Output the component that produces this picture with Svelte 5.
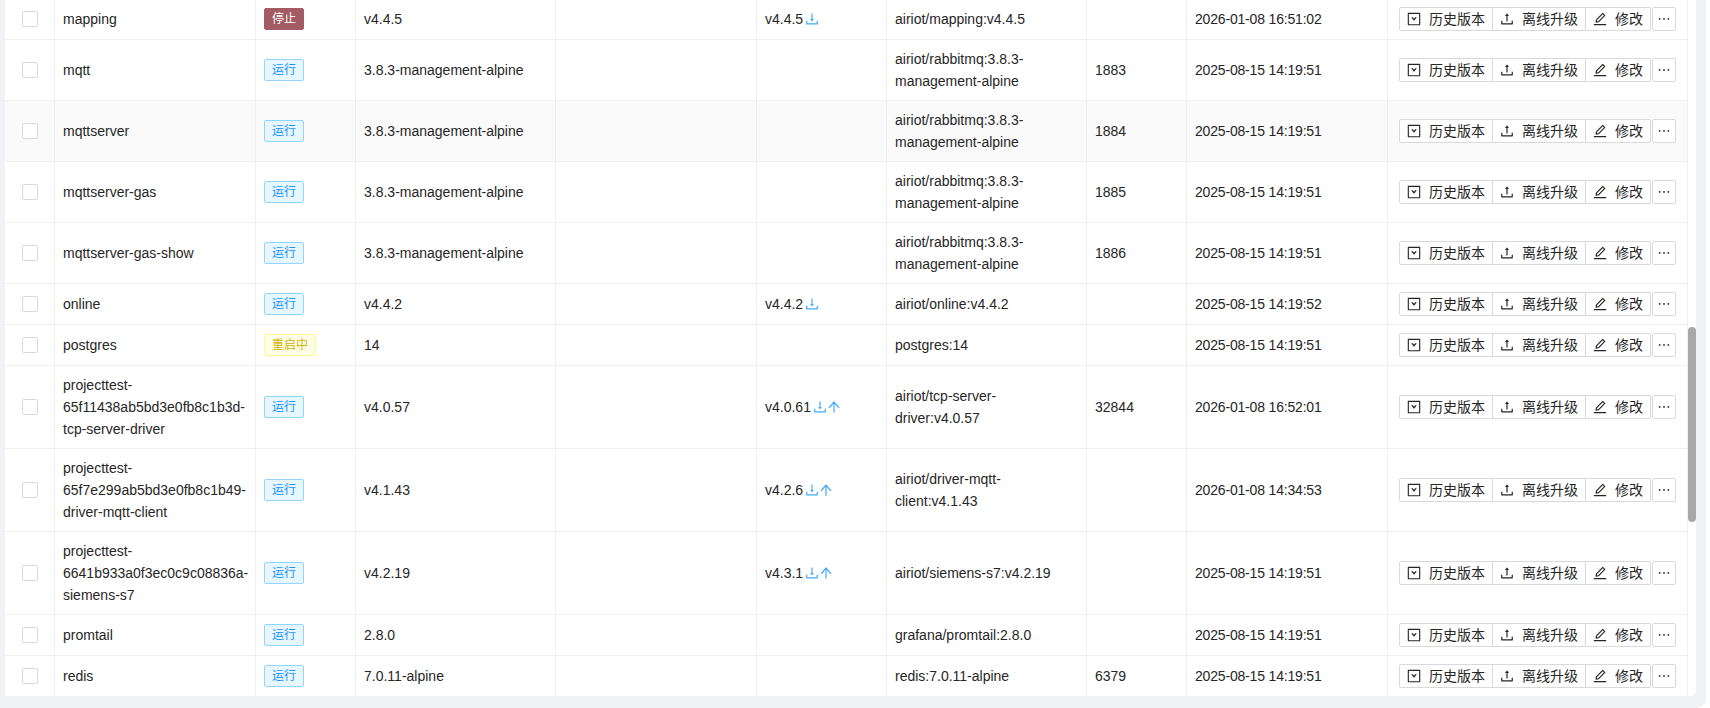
<script>
  const D = 'M505.7 661a8 8 0 0 0 12.6 0l112-141.7c4.1-5.2.4-12.9-6.3-12.9h-74.1V168c0-4.4-3.6-8-8-8h-60c-4.4 0-8 3.6-8 8v338.3H400c-6.7 0-10.4 7.7-6.3 12.9l112 141.8zM878 626h-60c-4.4 0-8 3.6-8 8v154H214V634c0-4.4-3.6-8-8-8h-60c-4.4 0-8 3.6-8 8v198c0 17.7 14.3 32 32 32h684c17.7 0 32-14.3 32-32V634c0-4.4-3.6-8-8-8z';
  const U = 'M400 317.7h73.9V656c0 4.4 3.6 8 8 8h60c4.4 0 8-3.6 8-8V317.7H624c6.7 0 10.4-7.7 6.3-12.9L518.3 163a8 8 0 0 0-12.6 0l-112 141.7c-4.1 5.3-.4 13 6.3 13zM878 626h-60c-4.4 0-8 3.6-8 8v154H214V634c0-4.4-3.6-8-8-8h-60c-4.4 0-8 3.6-8 8v198c0 17.7 14.3 32 32 32h684c17.7 0 32-14.3 32-32V634c0-4.4-3.6-8-8-8z';
  const E = 'M257.7 752c2 0 4-.2 6-.5L431.9 722c2-.4 3.9-1.3 5.3-2.8l423.9-423.9a9.94 9.94 0 0 0 0-14.1L694.9 114.9c-1.9-1.9-4.4-2.9-7.1-2.9s-5.2 1-7.1 2.9L256.8 538.8c-1.5 1.5-2.4 3.3-2.8 5.3l-29.5 168.2a33.5 33.5 0 0 0 9.4 29.8c6.6 6.4 14.9 9.9 23.8 9.9zm67.4-174.4L687.8 215l73.3 73.3-362.7 362.6-88.9 15.7 15.6-89zM880 836H144c-17.7 0-32 14.3-32 32v36c0 4.4 3.6 8 8 8h784c4.4 0 8-3.6 8-8v-36c0-17.7-14.3-32-32-32z';
  const M = 'M176 511a56 56 0 1 0 112 0 56 56 0 1 0-112 0zm280 0a56 56 0 1 0 112 0 56 56 0 1 0-112 0zm280 0a56 56 0 1 0 112 0 56 56 0 1 0-112 0z';
  const A = 'M868 545.5L536.1 163a31.96 31.96 0 0 0-48.3 0L156 545.5a7.97 7.97 0 0 0 6 13.2h81c4.6 0 9-2 12.1-5.5L474 300.9V864c0 4.4 3.6 8 8 8h60c4.4 0 8-3.6 8-8V300.9l218.9 252.3c3 3.5 7.4 5.5 12.1 5.5h81c6.8 0 10.5-8 6-13.2z';
  const S = 'M880 112H144c-17.7 0-32 14.3-32 32v736c0 17.7 14.3 32 32 32h736c17.7 0 32-14.3 32-32V144c0-17.7-14.3-32-32-32zm-40 728H184V184h656v656z';
  const C = 'M349 396h81c5 0 10 2 13 6l69 95 69-95c3-4 8-6 13-6h81c6.500 0 10 7 6 12.700L531 612c-5 7-33 7-38 0L343 408.700c-4-5.700-.5-12.700 6-12.700z';

  const rows = [
    { name: 'mapping', status: 'stop', version: 'v4.4.5', latest: 'v4.4.5', image: 'airiot/mapping:v4.4.5', port: '', time: '2026-01-08 16:51:02' },
    { name: 'mqtt', status: 'run', version: '3.8.3-management-alpine', image: 'airiot/rabbitmq:3.8.3-management-alpine', port: '1883', time: '2025-08-15 14:19:51' },
    { name: 'mqttserver', status: 'run', version: '3.8.3-management-alpine', image: 'airiot/rabbitmq:3.8.3-management-alpine', port: '1884', time: '2025-08-15 14:19:51', hover: true },
    { name: 'mqttserver-gas', status: 'run', version: '3.8.3-management-alpine', image: 'airiot/rabbitmq:3.8.3-management-alpine', port: '1885', time: '2025-08-15 14:19:51' },
    { name: 'mqttserver-gas-show', status: 'run', version: '3.8.3-management-alpine', image: 'airiot/rabbitmq:3.8.3-management-alpine', port: '1886', time: '2025-08-15 14:19:51' },
    { name: 'online', status: 'run', version: 'v4.4.2', latest: 'v4.4.2', image: 'airiot/online:v4.4.2', port: '', time: '2025-08-15 14:19:52' },
    { name: 'postgres', status: 'restart', version: '14', image: 'postgres:14', port: '', time: '2025-08-15 14:19:51' },
    { name: 'projecttest-65f11438ab5bd3e0fb8c1b3d-tcp-server-driver', status: 'run', version: 'v4.0.57', latest: 'v4.0.61', up: true, image: 'airiot/tcp-server-driver:v4.0.57', port: '32844', time: '2026-01-08 16:52:01' },
    { name: 'projecttest-65f7e299ab5bd3e0fb8c1b49-driver-mqtt-client', status: 'run', version: 'v4.1.43', latest: 'v4.2.6', up: true, image: 'airiot/driver-mqtt-client:v4.1.43', port: '', time: '2026-01-08 14:34:53' },
    { name: 'projecttest-6641b933a0f3ec0c9c08836a-siemens-s7', status: 'run', version: 'v4.2.19', latest: 'v4.3.1', up: true, image: 'airiot/siemens-s7:v4.2.19', port: '', time: '2025-08-15 14:19:51' },
    { name: 'promtail', status: 'run', version: '2.8.0', image: 'grafana/promtail:2.8.0', port: '', time: '2025-08-15 14:19:51' },
    { name: 'redis', status: 'run', version: '7.0.11-alpine', image: 'redis:7.0.11-alpine', port: '6379', time: '2025-08-15 14:19:51' }
  ];
  const labels = { run: '运行', stop: '停止', restart: '重启中' };
</script>

{#snippet icon(d, cls = '')}
  <svg class="icon {cls}" viewBox="64 64 896 896" fill="currentColor" aria-hidden="true"><path {d} /></svg>
{/snippet}

<div class="page">
  <div class="panel">
    <table>
      <colgroup>
        <col class="c1" /><col class="c2" /><col class="c3" /><col class="c4" /><col class="c5" />
        <col class="c6" /><col class="c7" /><col class="c8" /><col class="c9" /><col class="c10" />
      </colgroup>
      <tbody>
        {#each rows as r}
          <tr class:hover={r.hover}>
            <td class="check"><span class="box"></span></td>
            <td class="name">{r.name}</td>
            <td><span class="tag {r.status}">{labels[r.status]}</span></td>
            <td>{r.version}</td>
            <td></td>
            <td>
              {#if r.latest}
                <span class="latest">
                  {r.latest}
                  <span class="links">
                    {@render icon(D)}
                    {#if r.up}{@render icon(A)}{/if}
                  </span>
                </span>
              {/if}
            </td>
            <td>{r.image}</td>
            <td>{r.port}</td>
            <td class="time">{r.time}</td>
            <td class="actions">
              <div class="btns">
                <div class="group">
                  <button><svg class="icon" viewBox="64 64 896 896" fill="currentColor" aria-hidden="true"><path d={S} /><path d={C} /></svg><span>历史版本</span></button>
                  <button>{@render icon(U)}<span>离线升级</span></button>
                  <button>{@render icon(E)}<span>修改</span></button>
                </div>
                <button class="more">{@render icon(M)}</button>
              </div>
            </td>
          </tr>
        {/each}
      </tbody>
    </table>
    <div class="track"><div class="thumb"></div></div>
  </div>
</div>

<style>
  :global(body) {
    margin: 0;
    background: #fff;
    font-family: "Liberation Sans", "Noto Sans CJK SC", sans-serif;
    font-size: 14px;
    color: #262626;
  }
  .page {
    box-sizing: border-box;
    width: 1706px;
    height: 708px;
    padding: 0 10px 12px 5px;
    background: #f0f2f5;
    border-bottom-right-radius: 10px;
    overflow: hidden;
  }
  .panel {
    position: relative;
    display: flex;
    height: 696px;
    background: #fff;
    border-bottom-right-radius: 6px;
    overflow: hidden;
  }
  table {
    flex: none;
    width: 1683px;
    margin-top: -1px;
    align-self: flex-start;
    table-layout: fixed;
    border-collapse: separate;
    border-spacing: 0;
    line-height: 22px;
  }
  .c1 { width: 50px; }
  .c2 { width: 201px; }
  .c3 { width: 100px; }
  .c4 { width: 200px; }
  .c5 { width: 201px; }
  .c6 { width: 130px; }
  .c7 { width: 200px; }
  .c8 { width: 100px; }
  .c9 { width: 201px; }
  .c10 { width: 300px; }
  td {
    padding: 8px;
    border-right: 1px solid #f0f0f0;
    border-bottom: 1px solid #f0f0f0;
    vertical-align: middle;
    overflow-wrap: anywhere;
  }
  .hover td { background: #fafafa; }
  .check { padding: 0; text-align: center; }
  .name { padding-right: 0; }
  .time { letter-spacing: -0.18px; }
  .box {
    display: block;
    box-sizing: border-box;
    width: 16px;
    height: 16px;
    margin: 0 auto;
    background: #fff;
    border: 1px solid #d9d9d9;
    border-radius: 2px;
  }
  .tag {
    display: block;
    width: fit-content;
    box-sizing: border-box;
    height: 22px;
    padding: 0 7px;
    font-size: 12px;
    line-height: 20px;
    border: 1px solid;
    border-radius: 2px;
  }
  .run { color: #1890ff; background: #e6f7ff; border-color: #91d5ff; }
  .stop { color: #fff; background: #a35c64; border-color: #a35c64; }
  .restart { color: #d4b106; background: #feffe6; border-color: #fffb8f; }
  .icon {
    display: block;
    flex: none;
    width: 14px;
    height: 14px;
  }
  .latest { display: inline-flex; align-items: center; gap: 2px; }
  .links { display: inline-flex; gap: 0; color: #40a9ff; }
  .actions { padding: 8px 8px 8px 11px; }
  .btns { display: flex; gap: 1px; }
  .group { display: flex; }
  .group button + button { margin-left: -1px; }
  button {
    display: flex;
    align-items: center;
    gap: 8px;
    box-sizing: border-box;
    height: 24px;
    padding: 0 7px;
    margin: 0;
    font: inherit;
    line-height: 22px;
    color: #262626;
    background: #fff;
    border: 1px solid #d9d9d9;
    border-radius: 0;
  }
  .group button:first-child { border-radius: 2px 0 0 2px; }
  .group button:last-child { border-radius: 0 2px 2px 0; }
  button.more {
    justify-content: center;
    width: 24px;
    padding: 0;
    border-radius: 2px;
  }
  .track { flex: none; width: 8px; }
  .thumb {
    position: absolute;
    top: 327px;
    right: 0;
    width: 8px;
    height: 195px;
    background: #a8a8a8;
    border-radius: 4px;
  }
</style>
